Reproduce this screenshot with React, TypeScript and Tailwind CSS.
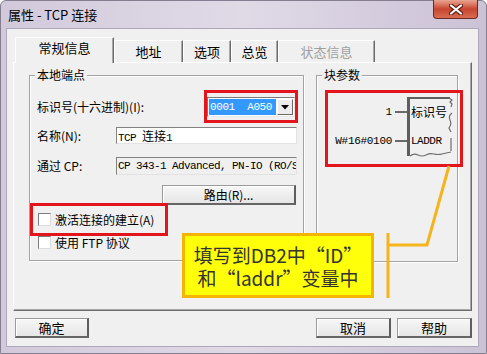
const cjk = "font-['Noto_Sans_CJK_SC','Noto_Sans',sans-serif]";
const mono = "font-['Liberation_Mono','Noto_Sans_CJK_SC',monospace]";

const raised =
  "border border-[#9a9a9a] border-r-2 border-b-2 border-r-[#5e5e5e] border-b-[#666666] shadow-[inset_1px_1px_0_#ffffff] bg-gradient-to-b from-[#f7f7f7] to-[#e6e6e6]";

const Tab = ({ label, w, active, disabled }: { label: string; w: string; active?: boolean; disabled?: boolean }) => (
  <div
    className={`${w} flex justify-center border-l border-t border-white border-r border-r-[#6b6b6b] shadow-[inset_-1px_0_0_#a8a8a8] ${
      active ? "h-[26px] -mb-px z-10 bg-[#f0f0f0] pt-[2px]" : "h-[22px] pt-[3px]"
    } ${disabled ? "text-[#a0a0a0]" : "text-black"} text-[13px] leading-[16px]`}
  >
    {label}
  </div>
);

const Checkbox = ({ label, className }: { label: string; className?: string }) => (
  <div className={`flex items-center h-[13px] ${className ?? ""}`}>
    <div className="ml-[8px] w-[13px] h-[13px] bg-white border border-[#7c7c7c] border-r-[#dcdcdc] border-b-[#dcdcdc]" />
    <span className="ml-[4px] text-[12px] leading-[16px] whitespace-nowrap">{label}</span>
  </div>
);

const GroupBox = ({ title, className, children }: { title: string; className: string; children?: React.ReactNode }) => (
  <div className={`relative border border-[#a3a3a3] shadow-[1px_1px_0_#ffffff,inset_1px_1px_0_#ffffff] ${className}`}>
    <span className="absolute -top-[9px] left-[5px] px-[2px] bg-[#f0f0f0] text-[12px] leading-[16px]">{title}</span>
    {children}
  </div>
);

export default function App() {
  return (
    <div className={`relative w-[487px] h-[354px] overflow-hidden bg-white ${cjk}`}>
      <div className="flex flex-col w-full h-full rounded-t-[6px] border border-[#857e90] bg-gradient-to-r from-[#d2cadb] via-[#e0dae7] to-[#cbc2d6]">
        {/* title bar */}
        <div className="h-[28px] flex items-start shrink-0">
          <span className="ml-[7px] mt-[6px] text-[13px] leading-[16px] text-black">属性 - TCP 连接</span>
          <div className="ml-auto mr-[8px] -mt-px w-[45px] h-[19px] rounded-b-[4px] border border-t-0 border-[#6e2a22] bg-gradient-to-b from-[#e8a492] via-[#c7452f] to-[#d86c52] flex items-center justify-center">
            <svg width="14" height="11" viewBox="0 0 14 11">
              <path d="M2 1.5 L12 9.5 M12 1.5 L2 9.5" stroke="#5b1c15" strokeWidth="4.2" strokeLinecap="round" />
              <path d="M2 1.5 L12 9.5 M12 1.5 L2 9.5" stroke="#ffffff" strokeWidth="2.2" strokeLinecap="round" />
            </svg>
          </div>
        </div>

        {/* client area */}
        <div className="ml-[6px] w-[471px] h-[317px] shrink-0 bg-[#f0f0f0] shadow-[0_0_0_1px_#aea7b9] flex flex-col">
          <div className="mt-[8px] ml-[8px] h-[25px] flex items-end">
            <Tab label="常规信息" w="w-[99px]" active />
            <Tab label="地址" w="w-[69px]" />
            <Tab label="选项" w="w-[48px]" />
            <Tab label="总览" w="w-[47px]" />
            <Tab label="状态信息" w="w-[97px]" disabled />
          </div>

          {/* tab panel */}
          <div className="ml-[6px] w-[459px] h-[249px] border-l border-t border-white border-r border-b border-r-[#6b6b6b] border-b-[#6b6b6b] shadow-[inset_-1px_-1px_0_#a8a8a8] flex items-start pl-[15px] pt-[12px] gap-[12px]">
            <GroupBox title="本地端点" className="w-[275px] h-[186px] flex flex-col pt-[21px]">
              <div className="flex items-center h-[20px]">
                <span className="ml-[7px] w-[170px] text-[12px] leading-[16px]">标识号(十六进制)(I):</span>
                <div className="w-[88px] h-[20px] flex border border-[#7a7a7a] border-r-[#e8e8e8] border-b-[#e8e8e8] bg-white p-[1px]">
                  <div className={`flex-1 bg-[#3399ff] text-white text-[11px] leading-[16px] tracking-[-0.4px] pl-[1px] whitespace-pre ${mono}`}>0001  A050</div>
                  <div className="ml-[1px] w-[16px] flex items-center justify-center border border-white border-r-[#6b6b6b] border-b-[#6b6b6b] bg-[#ececec]">
                    <svg width="8" height="5" viewBox="0 0 8 5">
                      <path d="M0 0 L8 0 L4 4.5 Z" fill="#000" />
                    </svg>
                  </div>
                </div>
              </div>

              <div className="mt-[10px] flex items-center h-[17px]">
                <span className="ml-[7px] w-[79px] text-[12px] leading-[16px]">名称(N):</span>
                <div className={`w-[181px] h-[17px] bg-white border border-[#828282] border-r-[#e2e2e2] border-b-[#e2e2e2] pl-[1px] text-[11px] leading-[15px] tracking-[-0.6px] ${mono}`}>
                  TCP <span className={`text-[12px] tracking-normal ${cjk}`}>连接</span>1
                </div>
              </div>

              <div className="mt-[13px] flex items-center h-[18px]">
                <span className="ml-[7px] w-[79px] text-[12px] leading-[16px]">通过 CP:</span>
                <div className={`w-[181px] h-[18px] overflow-hidden whitespace-nowrap bg-[#f0f0f0] border border-[#828282] border-r-[#e2e2e2] border-b-[#e2e2e2] pl-[1px] text-[11px] leading-[16px] tracking-[-0.6px] ${mono}`}>
                  CP 343-1 Advanced, PN-IO (RO/S
                </div>
              </div>

              <div className={`mt-[10px] ml-[132px] w-[134px] h-[20px] flex items-center justify-center text-[12px] leading-[16px] ${raised}`}>
                路由(R)...
              </div>

              <Checkbox label="激活连接的建立(A)" className="mt-[8px]" />
              <Checkbox label="使用 FTP 协议" className="mt-[10px]" />
            </GroupBox>

            <GroupBox title="块参数" className="w-[142px] h-[187px]">
              <div className="mt-[21px] flex">
                <div className="ml-[11px] w-[79px] flex flex-col items-end">
                  <div className="mt-[8px] h-[14px] flex items-center">
                    <span className={`text-[11px] leading-[14px] ${mono}`}>1</span>
                    <div className="ml-[3px] w-[12px] h-[2px] bg-[#6a6a6a]" />
                  </div>
                  <div className="mt-[15px] h-[14px] flex items-center">
                    <span className={`text-[11px] leading-[14px] tracking-[-0.3px] ${mono}`}>W#16#0100</span>
                    <div className="ml-[3px] w-[12px] h-[2px] bg-[#6a6a6a]" />
                  </div>
                </div>
                <div className="relative w-[43px] h-[59px] border-l-[3px] border-t-2 border-[#5e5e5e] flex flex-col pt-[5px] pl-[1px]">
                  <span className="text-[12px] leading-[16px]">标识号</span>
                  <span className={`mt-[13px] text-[11px] leading-[16px] tracking-[-0.5px] ${mono}`}>LADDR</span>
                  <svg className="absolute -top-[2px] -left-[3px]" width="48" height="62" viewBox="0 0 48 62">
                    <path
                      d="M42 1 L45 3 L43 5 L45 7 L44 10 M45 16 Q41 19 43 23 Q45 27 42 31 L44 35 M44 41 L44 54"
                      stroke="#6e6e6e"
                      strokeWidth="1.2"
                      fill="none"
                    />
                    <path
                      d="M3 59 Q7 56 11 58 T19 58 T27 57 T35 57 T44 55"
                      stroke="#6e6e6e"
                      strokeWidth="1.2"
                      fill="none"
                    />
                  </svg>
                </div>
              </div>
            </GroupBox>
          </div>

          {/* dialog buttons */}
          <div className="mt-[7px] h-[20px] flex text-[13px] leading-[16px]">
            <div className={`ml-[8px] w-[74px] flex items-center justify-center ${raised}`}>确定</div>
            <div className={`ml-auto w-[75px] flex items-center justify-center ${raised}`}>取消</div>
            <div className={`ml-[6px] mr-[6px] w-[75px] flex items-center justify-center ${raised}`}>帮助</div>
          </div>
        </div>
      </div>

      {/* annotations */}
      <div className="absolute left-[204px] top-[90px] w-[94px] h-[33px] border-[3px] border-[#e2141c]" />
      <div className="absolute left-[325px] top-[90px] w-[138px] h-[77px] border-[3px] border-[#e2141c]" />
      <div className="absolute left-[30px] top-[203px] w-[138px] h-[33px] border-[3px] border-[#e2141c]" />

      <svg className="absolute left-0 top-0 pointer-events-none" width="487" height="354">
        <path d="M388 233 L388 298" stroke="#f5b31c" strokeWidth="3" fill="none" />
        <path d="M388 245 L427 245 L449 166" stroke="#f5b31c" strokeWidth="3" fill="none" />
      </svg>

      <div className="absolute left-[182px] top-[233px] w-[192px] h-[65px] bg-[#ffff0a] border-[3px] border-[#f5b400] flex flex-col items-center justify-center text-[19px] leading-[23px] text-[#333333]">
        <span className="leading-[23px]">填写到DB2中“ID”</span>
        <span className="leading-[23px]">和“laddr”变量中</span>
      </div>
    </div>
  );
}
